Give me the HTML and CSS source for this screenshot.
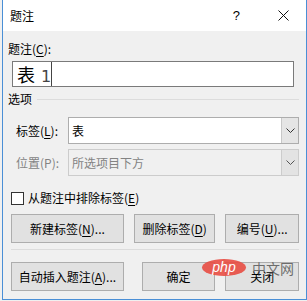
FILE: index.html
```html
<!DOCTYPE html>
<html lang="zh-CN">
<head>
    <meta charset="UTF-8">
    <title>题注</title>
    <link rel="stylesheet" href="styles.css">
</head>
<body>
    <div class="window">
        <div class="titlebar">
            <span class="title">题注</span>
            <span class="help">?</span>
            <svg class="close" width="11" height="11" viewBox="0 0 11 11">
                <path d="M0.5 0.5 L10.5 10.5 M10.5 0.5 L0.5 10.5" stroke="#111" stroke-width="1" fill="none"/>
            </svg>
        </div>

        <div class="content">
            <div class="field-label">题注(<u>C</u>):</div>
            <div class="caption-box">
                <span class="caption-fixed">表 <span class="num">1</span></span>
            </div>

            <div class="group-title">
                <span>选项</span>
                <span class="rule"></span>
            </div>

            <div class="row">
                <span class="row-label">标签(<u>L</u>):</span>
                <div class="combo">
                    <span class="combo-text">表</span>
                    <span class="combo-btn">
                        <svg width="9" height="5" viewBox="0 0 9 5"><path d="M0.5 0.5 L4.5 4.5 L8.5 0.5" stroke="#333" fill="none"/></svg>
                    </span>
                </div>
            </div>

            <div class="row row-second disabled">
                <span class="row-label">位置(P):</span>
                <div class="combo">
                    <span class="combo-text">所选项目下方</span>
                    <span class="combo-btn">
                        <svg width="9" height="5" viewBox="0 0 9 5"><path d="M0.5 0.5 L4.5 4.5 L8.5 0.5" stroke="#555" fill="none"/></svg>
                    </span>
                </div>
            </div>

            <label class="check">
                <span class="box"></span>
                <span>从题注中排除标签(<u>E</u>)</span>
            </label>

            <div class="buttons">
                <button class="btn btn-new">新建标签(<u>N</u>)...</button>
                <button class="btn btn-del">删除标签(<u>D</u>)</button>
                <button class="btn btn-num">编号(<u>U</u>)...</button>
            </div>

            <div class="sep"></div>

            <div class="buttons">
                <button class="btn btn-new">自动插入题注(<u>A</u>)...</button>
                <button class="btn btn-ok">确定</button>
                <button class="btn btn-num">关闭</button>
            </div>
        </div>

        <div class="watermark">
            <span class="wm-php">php</span>
            <span class="wm-cn">中文网</span>
        </div>
    </div>
</body>
</html>
```

FILE: styles.css
```css
body {
    margin: 0;
    background: #f0f0f0;
    font-family: "Noto Sans CJK SC", "Noto Sans", sans-serif;
    font-size: 12px;
    color: #000;
}
u {
    text-decoration-thickness: 1px;
    text-underline-offset: 2px;
}
.window {
    position: relative;
    margin-left: 2px;
    width: 303px;
    height: 299px;
    border-left: 1px solid #4a8fd6;
    border-right: 1px solid #4a8fd6;
    border-bottom: 1px solid #4a8fd6;
    background: #f0f0f0;
}
.titlebar {
    height: 31px;
    background: #fff;
    display: flex;
    align-items: center;
}
.title {
    margin-left: 7px;
    line-height: 16px;
}
.help {
    margin-left: auto;
    font-family: "Liberation Sans", sans-serif;
    font-size: 13px;
    margin-right: 38px;
}
.close {
    margin-right: 17px;
}
.content {
    padding: 0 7px 0 5px;
}
.field-label {
    margin-top: 10px;
    line-height: 16px;
}
.caption-box {
    margin-top: 4px;
    margin-left: 4px;
    width: 280px;
    height: 24px;
    border: 1px solid #7a7a7a;
    background: #fff;
    display: flex;
}
.caption-fixed {
    width: 34px;
    padding-left: 4px;
    border-right: 1px solid #444;
    font-size: 18px;
    line-height: 24px;
    white-space: nowrap;
}
.num {
    font-family: "DejaVu Sans", sans-serif;
    font-size: 16px;
    color: #444;
    margin-left: 2px;
}
.group-title {
    margin-top: 4px;
    display: flex;
    align-items: center;
    line-height: 16px;
}
.rule {
    flex: 1;
    margin-left: 5px;
    border-top: 1px solid #dcdcdc;
}
.row {
    margin-top: 10px;
    display: flex;
    align-items: center;
}
.row-second {
    margin-top: 5px;
}
.row-label {
    width: 52px;
    padding-left: 8px;
}
.combo {
    flex: 1;
    height: 25px;
    border: 1px solid #adadad;
    background: #fff;
    display: flex;
}
.combo-text {
    flex: 1;
    padding-left: 3px;
    line-height: 25px;
}
.combo-btn {
    width: 16px;
    background: #e5e5e5;
    border-left: 1px solid #c8c8c8;
    display: flex;
    align-items: center;
    justify-content: center;
}
.disabled .row-label,
.disabled .combo-text {
    color: #838383;
}
.disabled .combo {
    background: #f0f0f0;
    border-color: #cccccc;
}
.disabled .combo-btn {
    background: #e3e3e3;
    border-left-color: #cccccc;
}
.check {
    margin-top: 14px;
    display: flex;
    align-items: center;
    line-height: 16px;
}
.box {
    width: 11px;
    height: 11px;
    border: 1px solid #333;
    background: #fff;
    margin-left: 3px;
    margin-right: 4px;
}
.buttons {
    margin-top: 8px;
    display: flex;
    gap: 10px;
}
.sep + .buttons {
    margin-top: 12px;
}
.btn {
    height: 29px;
    padding: 0;
    border: 1px solid #adadad;
    background: #e1e1e1;
    font-family: inherit;
    font-size: 12px;
    color: #000;
}
.btn-new {
    width: 115px;
    margin-left: 3px;
}
.btn-del {
    width: 83px;
}
.btn-num {
    width: 75px;
}
.btn-ok {
    width: 75px;
    margin-left: 8px;
}
.sep {
    margin-top: 6px;
    margin-left: 3px;
    border-top: 1px solid #dcdcdc;
}
.watermark {
    position: absolute;
    left: 199px;
    top: 259px;
    display: flex;
    align-items: center;
}
.wm-php {
    width: 44px;
    height: 17px;
    border-radius: 50%;
    background: rgba(232, 76, 66, 0.9);
    color: #fff;
    font-family: "Liberation Sans", sans-serif;
    font-style: italic;
    font-size: 14px;
    line-height: 16px;
    text-align: center;
}
.wm-cn {
    margin-left: 6px;
    font-size: 14px;
    color: rgba(70, 70, 70, 0.75);
    line-height: 16px;
}
```
